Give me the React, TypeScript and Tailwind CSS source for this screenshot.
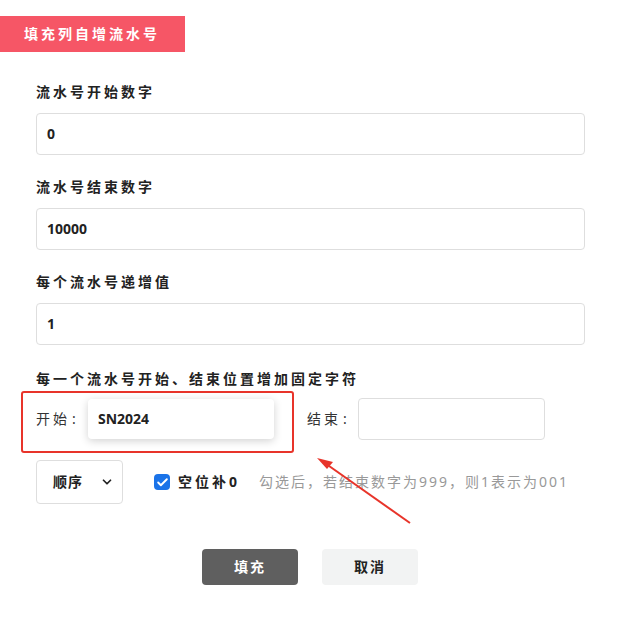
import { ChevronDown, Check } from "lucide-react";

const font = { fontFamily: '"Noto Sans", "Noto Sans CJK SC", sans-serif' };

function Field({ label, value }: { label: string; value: string }) {
  return (
    <div className="mb-[22px]">
      <p className="text-sm leading-5 font-bold tracking-[3px] text-[#222] mb-[11px]">{label}</p>
      <div className="h-[42px] w-[549px] border border-[#dedede] rounded flex items-center px-[10px] text-sm font-bold text-[#222]">
        {value}
      </div>
    </div>
  );
}

export default function App() {
  return (
    <div className="relative w-[618px] h-[620px] bg-white" style={font}>
      {/* Header tag */}
      <div className="pt-4">
        <div className="w-[185px] h-9 bg-[#f65666] flex items-center pl-6 text-white text-sm font-bold tracking-[3px]">
          填充列自增流水号
        </div>
      </div>

      <div className="pl-9 pt-[30px]">
        <Field label="流水号开始数字" value="0" />
        <Field label="流水号结束数字" value="10000" />
        <Field label="每个流水号递增值" value="1" />

        <p className="text-sm leading-5 font-bold tracking-[3px] text-[#222] pt-[2px]">
          每一个流水号开始、结束位置增加固定字符
        </p>

        {/* start / end chars */}
        <div className="flex items-center mt-[9px] h-[42px]">
          <span className="text-sm tracking-[3px] text-[#333] w-[52px]">
            开始<span className="ml-[2px]">:</span>
          </span>
          <div className="h-10 w-[186px] rounded bg-white shadow-[0_2px_8px_rgba(0,0,0,0.18)] flex items-center px-[10px] text-sm font-bold text-[#222]">
            SN2024
          </div>
          <span className="ml-[33px] text-sm tracking-[3px] text-[#333] w-[51px]">
            结束<span className="ml-[2px]">:</span>
          </span>
          <div className="h-[42px] w-[187px] border border-[#dedede] rounded" />
        </div>

        {/* order + pad zero */}
        <div className="flex items-center mt-5">
          <div className="h-11 w-[87px] border border-[#dedede] rounded flex items-center justify-between pl-4 pr-[8px] text-sm font-bold text-[#222]">
            <span className="tracking-[1px]">顺序</span>
            <ChevronDown size={14} strokeWidth={3} />
          </div>
          <span className="ml-[31px] w-4 h-4 rounded-sm bg-[#1a73e8] flex items-center justify-center">
            <Check size={13} strokeWidth={3.5} className="text-white" />
          </span>
          <span className="ml-2 text-sm font-bold tracking-[3px] text-[#222]">空位补0</span>
          <span className="ml-[19px] text-sm tracking-[2px] text-[#999]">
            勾选后，若结束数字为999，则1表示为001
          </span>
        </div>

        {/* buttons */}
        <div className="flex justify-center gap-6 mt-[45px] w-[548px]">
          <button className="w-24 h-9 rounded bg-[#5f5f5f] text-white text-sm font-bold tracking-[2px]">填充</button>
          <button className="w-24 h-9 rounded bg-[#f2f3f3] text-[#222] text-sm font-bold tracking-[2px]">取消</button>
        </div>
      </div>

      {/* annotation: red box + arrow */}
      <div className="absolute left-[21px] top-[391px] w-[273px] h-[62px] border-2 border-[#e8342a] rounded-[3px] pointer-events-none" />
      <svg className="absolute left-0 top-0 pointer-events-none" width="618" height="620">
        <path d="M410 523 L322 461" stroke="#e8342a" strokeWidth="2" fill="none" />
        <path d="M317 458 L333 462 L327 469 Z" fill="#e8342a" />
      </svg>
    </div>
  );
}
